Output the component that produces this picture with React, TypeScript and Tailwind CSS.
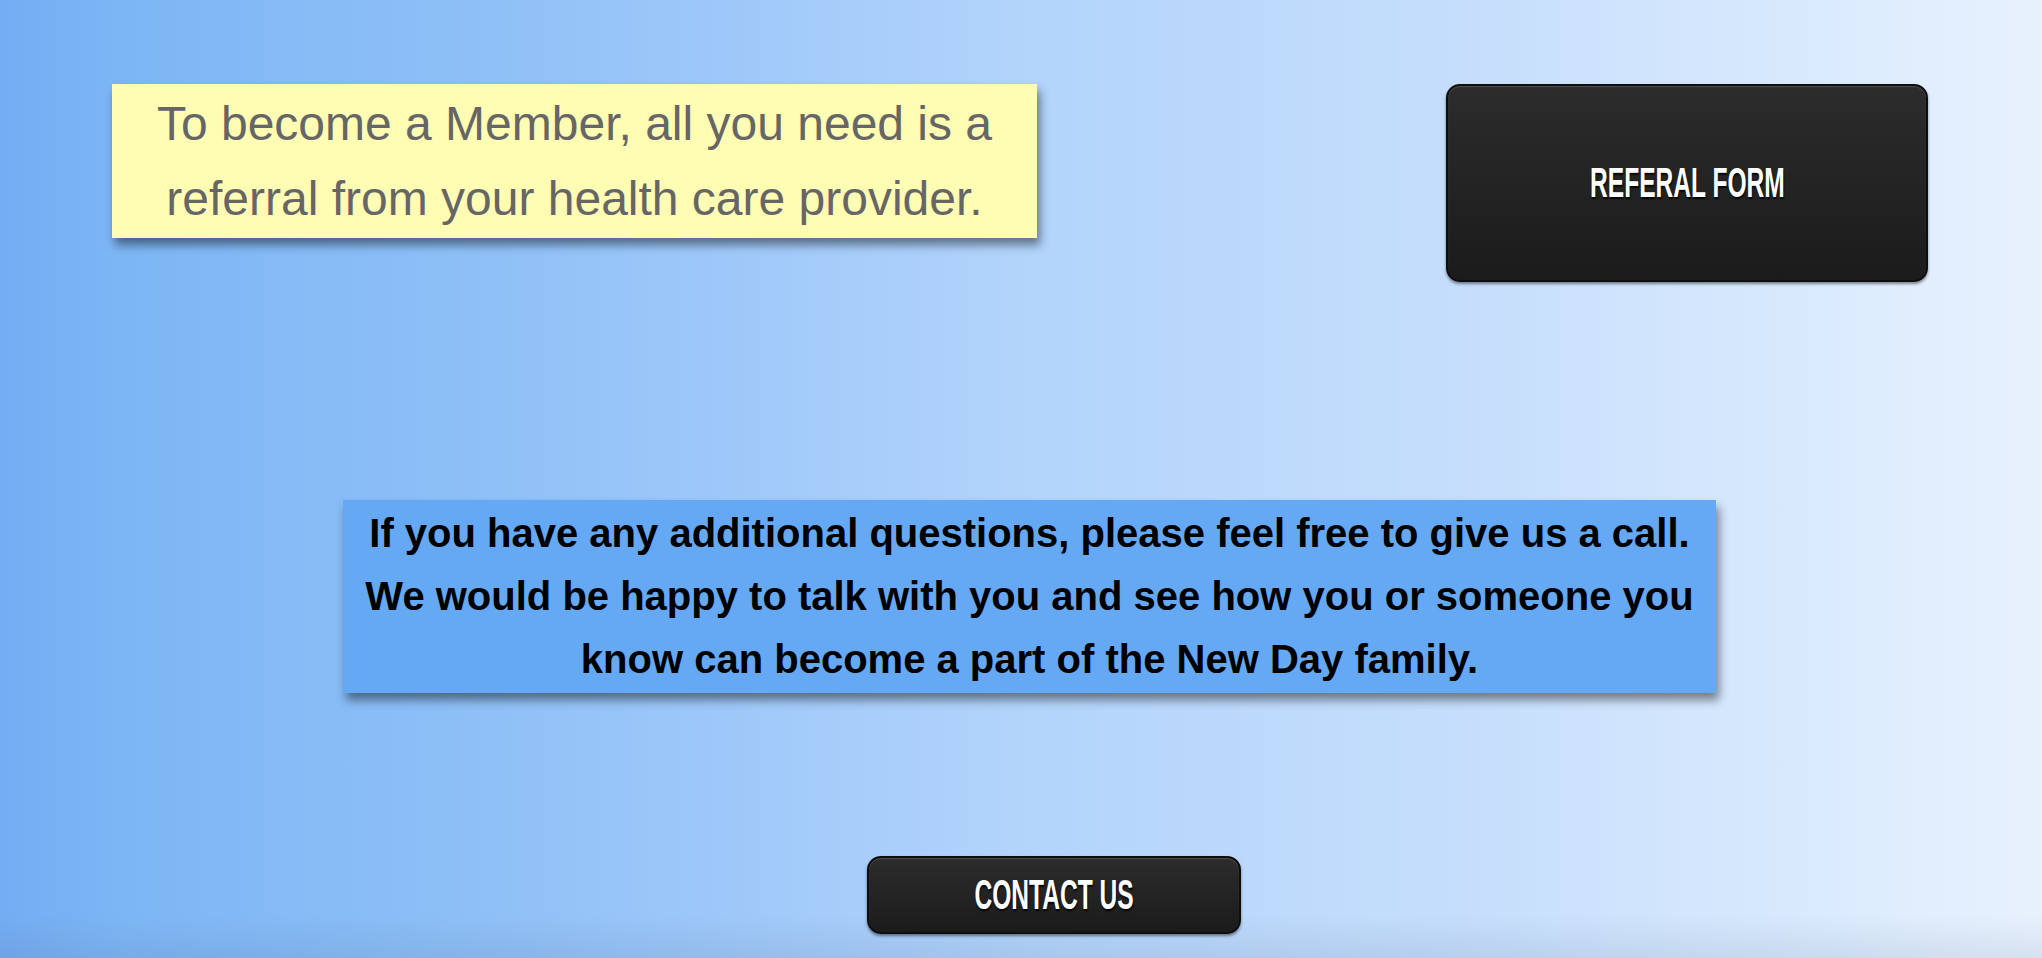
import React from "react";

const btnText =
  "inline-block scale-x-[0.585] text-[42px] font-bold leading-none text-white [font-family:'Liberation_Sans',Arial,sans-serif] [text-shadow:1px_2px_2px_rgba(0,0,0,0.85)]";

const btnBase =
  "flex items-center justify-center rounded-[14px] border-2 border-[#0e0e0e] bg-[linear-gradient(to_bottom,#2c2c2c,#1b1b1b)] shadow-[inset_0_1px_1px_rgba(255,255,255,0.18),0_2px_3px_rgba(0,0,0,0.45)]";

export default function App() {
  return (
    <div className="relative flex h-[958px] w-full flex-col overflow-hidden bg-[image:linear-gradient(to_bottom,transparent_915px,rgba(60,80,110,0.1)),linear-gradient(to_right,#74adf3_0%,#7db6f5_6%,#8fc0f7_24%,#a2cafa_38%,#b2d4fb_50%,#c6defc_72%,#d6e8fd_86%,#e8f2fe_100%)] [font-family:'Liberation_Sans',Arial,sans-serif]">
      <div className="flex items-start justify-between pl-[112px] pr-[114px] pt-[84px]">
        <div className="w-[925px] bg-[#fffcb3] py-[2px] text-center text-[48px] leading-[75px] text-[#666666] shadow-[3px_7px_9px_rgba(0,0,0,0.45)]">
          To become a Member, all you need is a
          <br />
          referral from your health care provider.
        </div>
        <div className={`${btnBase} h-[198px] w-[482px]`}>
          <span className={btnText}>REFERAL FORM</span>
        </div>
      </div>

      <div className="ml-[343px] mt-[218px] w-[1373px] bg-[#65a9f5] py-[2px] text-center text-[40px] font-bold leading-[63px] text-black shadow-[3px_7px_9px_rgba(0,0,0,0.45)]">
        If you have any additional questions, please feel free to give us a call.
        <br />
        We would be happy to talk with you and see how you or someone you
        <br />
        know can become a part of the New Day family.
      </div>

      <div className={`${btnBase} ml-[867px] mt-[163px] h-[78px] w-[374px]`}>
        <span className={btnText}>CONTACT US</span>
      </div>
    </div>
  );
}
